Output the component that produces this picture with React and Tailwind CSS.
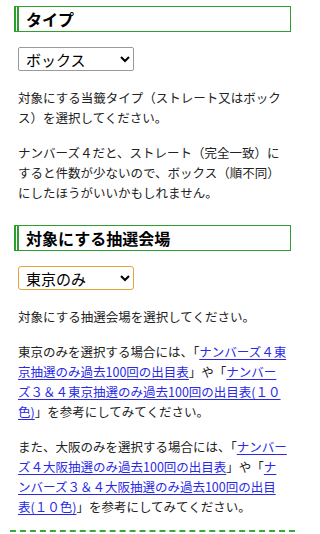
import React from 'react';

const font = { fontFamily: '"Noto Sans CJK JP", "Noto Sans", sans-serif' };

const Heading = ({ children }) => (
  <h2 className="border border-l-[5px] border-double border-[#2e9e2e] pl-[7px] text-[16px] font-bold leading-[24px] text-black">
    {children}
  </h2>
);

const Link = ({ children }) => (
  <a href="#" className="text-[#2a2ae6] underline underline-offset-2">{children}</a>
);

const App = () => {
  return (
    <div className="bg-white min-h-screen text-[#222]" style={font}>
      <div className="mx-[10px] w-[285px] px-1 pt-[6px] pb-[13px] border-b-2 border-dashed border-[#3aa83a]">
        {/* タイプ */}
        <Heading>タイプ</Heading>
        <select className="mt-[15px] ml-1 h-[24px] w-[116px] border border-[#9a9a9a] rounded-[2px] pl-[3px] text-[15px] leading-[20px] text-black bg-white">
          <option>ボックス</option>
          <option>ストレート</option>
        </select>
        <div className="ml-1 w-[270px] text-[12.5px] leading-[20px]">
          <p className="mt-[17px]">対象にする当籤タイプ（ストレート又はボックス）を選択してください。</p>
          <p className="mt-[15px]">ナンバーズ４だと、ストレート（完全一致）にすると件数が少ないので、ボックス（順不同）にしたほうがいいかもしれません。</p>
        </div>

        {/* 抽選会場 */}
        <div className="mt-[22px]">
          <Heading>対象にする抽選会場</Heading>
        </div>
        <select className="mt-[15px] ml-1 h-[24px] w-[116px] border border-[#e6a23c] rounded-[3px] pl-[3px] text-[15px] leading-[20px] text-black bg-white">
          <option>東京のみ</option>
          <option>大阪のみ</option>
          <option>すべて</option>
        </select>
        <div className="ml-1 w-[270px] text-[12.5px] leading-[20px]">
          <p className="mt-[17px]">対象にする抽選会場を選択してください。</p>
          <p className="mt-[15px]">
            東京のみを選択する場合には、「<Link>ナンバーズ４東京抽選のみ過去100回の出目表</Link>」や「<Link>ナンバーズ３＆４東京抽選のみ過去100回の出目表(１０色)</Link>」を参考にしてみてください。
          </p>
          <p className="mt-[15px]">
            また、大阪のみを選択する場合には、「<Link>ナンバーズ４大阪抽選のみ過去100回の出目表</Link>」や「<Link>ナンバーズ３＆４大阪抽選のみ過去100回の出目表(１０色)</Link>」を参考にしてみてください。
          </p>
        </div>
      </div>
    </div>
  );
};

export default App;
